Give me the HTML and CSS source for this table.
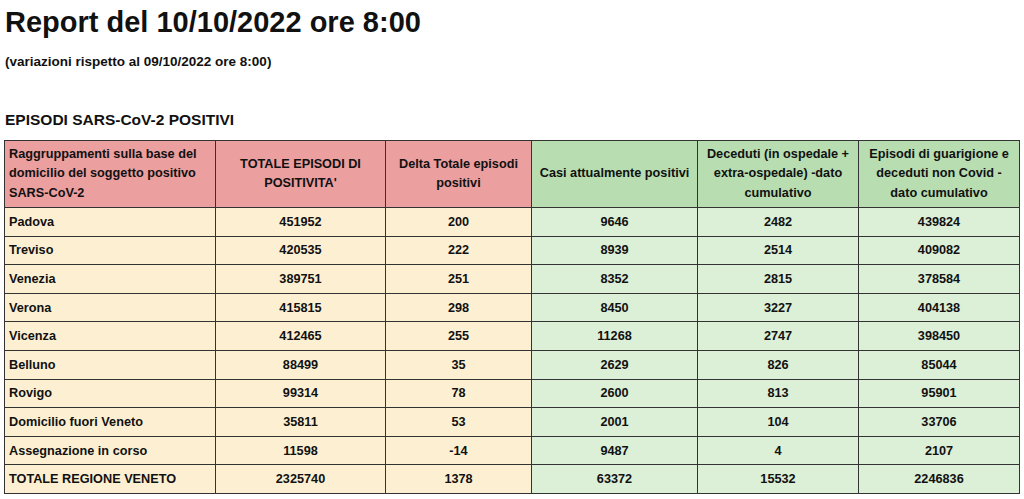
FILE: index.html
```html
<!DOCTYPE html>
<html lang="it">
<head>
<meta charset="utf-8">
<title>Report</title>
<link rel="stylesheet" href="styles.css">
</head>
<body>
<div class="page">
  <h1 class="title">Report del 10/10/2022 ore 8:00</h1>
  <p class="subtitle">(variazioni rispetto al 09/10/2022 ore 8:00)</p>
  <h2 class="section">EPISODI SARS-CoV-2 POSITIVI</h2>
  <table class="report">
    <colgroup>
      <col class="c1"><col class="c2"><col class="c3"><col class="c4"><col class="c5"><col class="c6">
    </colgroup>
    <thead>
      <tr>
        <th class="red left">Raggruppamenti sulla base del domicilio del soggetto positivo SARS-CoV-2</th>
        <th class="red">TOTALE EPISODI DI POSITIVITA'</th>
        <th class="red">Delta Totale episodi positivi</th>
        <th class="green">Casi attualmente positivi</th>
        <th class="green">Deceduti (in ospedale + extra-ospedale) -dato cumulativo</th>
        <th class="green">Episodi di guarigione e deceduti non Covid - dato cumulativo</th>
      </tr>
    </thead>
    <tbody>
      <tr><td class="y left">Padova</td><td class="y">451952</td><td class="y">200</td><td class="g">9646</td><td class="g">2482</td><td class="g">439824</td></tr>
      <tr><td class="y left">Treviso</td><td class="y">420535</td><td class="y">222</td><td class="g">8939</td><td class="g">2514</td><td class="g">409082</td></tr>
      <tr><td class="y left">Venezia</td><td class="y">389751</td><td class="y">251</td><td class="g">8352</td><td class="g">2815</td><td class="g">378584</td></tr>
      <tr><td class="y left">Verona</td><td class="y">415815</td><td class="y">298</td><td class="g">8450</td><td class="g">3227</td><td class="g">404138</td></tr>
      <tr><td class="y left">Vicenza</td><td class="y">412465</td><td class="y">255</td><td class="g">11268</td><td class="g">2747</td><td class="g">398450</td></tr>
      <tr><td class="y left">Belluno</td><td class="y">88499</td><td class="y">35</td><td class="g">2629</td><td class="g">826</td><td class="g">85044</td></tr>
      <tr><td class="y left">Rovigo</td><td class="y">99314</td><td class="y">78</td><td class="g">2600</td><td class="g">813</td><td class="g">95901</td></tr>
      <tr><td class="y left">Domicilio fuori Veneto</td><td class="y">35811</td><td class="y">53</td><td class="g">2001</td><td class="g">104</td><td class="g">33706</td></tr>
      <tr><td class="y left">Assegnazione in corso</td><td class="y">11598</td><td class="y">-14</td><td class="g">9487</td><td class="g">4</td><td class="g">2107</td></tr>
      <tr><td class="y left">TOTALE REGIONE VENETO</td><td class="y">2325740</td><td class="y">1378</td><td class="g">63372</td><td class="g">15532</td><td class="g">2246836</td></tr>
    </tbody>
  </table>
</div>
</body>
</html>
```

FILE: styles.css
```css
html, body {
  margin: 0;
  padding: 0;
  background: #ffffff;
}
body {
  font-family: "Liberation Sans", Arial, sans-serif;
  color: #111;
}
.page {
  padding: 2px 6px 0 4px;
}
.title {
  font-size: 29px;
  font-weight: bold;
  margin: 0 0 0 1px;
  line-height: 40px;
}
.subtitle {
  font-size: 13.5px;
  font-weight: bold;
  margin: 12px 0 0 1px;
  line-height: 16px;
}
.section {
  font-size: 15.5px;
  font-weight: bold;
  margin: 41px 0 0 1px;
  line-height: 18px;
}
.report {
  margin-top: 11px;
  border-collapse: collapse;
  table-layout: fixed;
  width: 1015px;
  font-size: 12.7px;
  font-weight: bold;
  border: 1px solid #555;
}
.c1 { width: 211px; }
.c2 { width: 170px; }
.c3 { width: 146px; }
.c4 { width: 166px; }
.c5 { width: 161px; }
.c6 { width: 161px; }
.report th, .report td {
  border: 1px solid #333;
  text-align: center;
  padding: 0 4px;
  vertical-align: middle;
}
.report th {
  height: 66px;
  line-height: 19.5px;
  font-weight: bold;
}
.report td {
  height: 27.6px;
  line-height: 16px;
}
.report .left {
  text-align: left;
  padding-left: 4px;
}
.red { background: #eb9f9f; }
.green { background: #b7ddb0; }
.y { background: #fdf0d2; }
.g { background: #dcefd7; }
```
